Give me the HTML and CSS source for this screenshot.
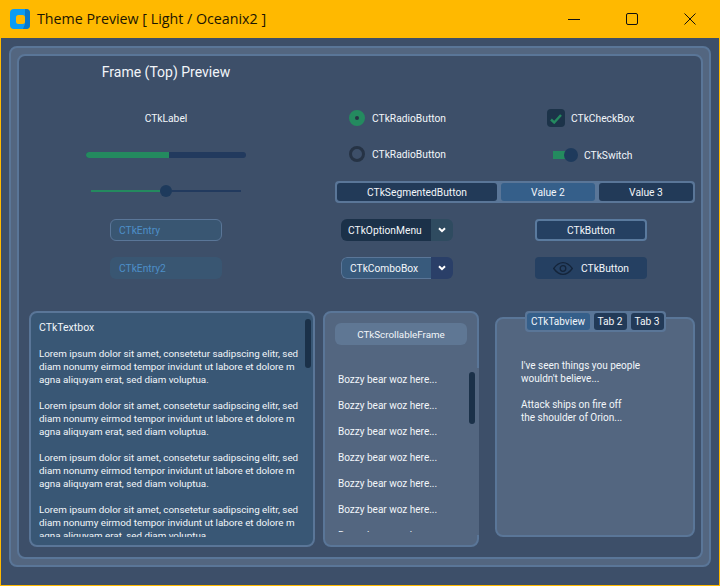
FILE: index.html
```html
<!DOCTYPE html>
<html lang="en">
<head>
    <meta charset="UTF-8">
    <title>Theme Preview</title>
    <link rel="stylesheet" href="styles.css">
</head>
<body>

<div class="window">
    <div class="titlebar">
        <svg class="app-icon" width="20" height="20" viewBox="0 0 20 20">
            <rect width="20" height="20" rx="4" fill="#0a9cf5"/>
            <path d="M15 0h1a4 4 0 0 1 4 4v12a4 4 0 0 1-4 4h-3l2-5z" fill="#0a78c8"/>
            <rect x="6" y="6" width="9" height="9" rx="2.5" fill="#ffb900"/>
        </svg>
        <span class="window-title">Theme Preview [ Light / Oceanix2 ]</span>
        <div class="window-controls">
            <svg width="12" height="12" viewBox="0 0 12 12"><path d="M0 6.5h12" stroke="#111" fill="none"/></svg>
            <svg width="12" height="12" viewBox="0 0 12 12"><rect x="0.5" y="0.5" width="11" height="11" rx="1.5" stroke="#111" fill="none"/></svg>
            <svg width="12" height="12" viewBox="0 0 12 12"><path d="M0.5 0.5l11 11M11.5 0.5l-11 11" stroke="#111" fill="none"/></svg>
        </div>
    </div>

    <div class="content">
        <div class="frame-outer">
            <div class="frame-inner">
                <div class="controls">
                    <div class="frame-title">Frame (Top) Preview</div>

                    <div class="cell c1 r1 label">CTkLabel</div>
                    <div class="cell c2 r1"><div class="radio-row"><span class="radio on"></span>CTkRadioButton</div></div>
                    <div class="cell c3 r1">
                        <div class="check-row">
                            <span class="checkbox">
                                <svg width="12" height="10" viewBox="0 0 12 10"><path d="M1 5.5l3.2 3L11 1" stroke="#248a5f" stroke-width="2.4" fill="none"/></svg>
                            </span>CTkCheckBox
                        </div>
                    </div>

                    <div class="cell c1 r2"><div class="progress"><div class="progress-fill" style="width: 52%"></div></div></div>
                    <div class="cell c2 r2"><div class="radio-row raised"><span class="radio"></span>CTkRadioButton</div></div>
                    <div class="cell c3 r2">
                        <div class="switch-row"><span class="switch"><span class="switch-thumb"></span></span>CTkSwitch</div>
                    </div>

                    <div class="cell c1 r3">
                        <div class="slider">
                            <div class="slider-done"></div>
                            <div class="slider-thumb"></div>
                            <div class="slider-rest"></div>
                        </div>
                    </div>
                    <div class="segmented">
                        <div class="seg-btn seg-first">CTkSegmentedButton</div>
                        <div class="seg-btn seg-on">Value 2</div>
                        <div class="seg-btn">Value 3</div>
                    </div>

                    <div class="cell c1 r4"><div class="entry bordered">CTkEntry</div></div>
                    <div class="cell c2 r4">
                        <div class="dropdown option">
                            <span class="dropdown-text">CTkOptionMenu</span>
                            <span class="dropdown-arrow"><svg width="8" height="6" viewBox="0 0 8 6"><path d="M1 1.2l3 3 3-3" stroke="#fff" stroke-width="2" fill="none"/></svg></span>
                        </div>
                    </div>
                    <div class="cell c3 r4"><div class="btn btn-outline">CTkButton</div></div>

                    <div class="cell c1 r5"><div class="entry">CTkEntry2</div></div>
                    <div class="cell c2 r5">
                        <div class="dropdown combo">
                            <span class="dropdown-text">CTkComboBox</span>
                            <span class="dropdown-arrow"><svg width="8" height="6" viewBox="0 0 8 6"><path d="M1 1.2l3 3 3-3" stroke="#fff" stroke-width="2" fill="none"/></svg></span>
                        </div>
                    </div>
                    <div class="cell c3 r5">
                        <div class="btn">
                            <svg width="20" height="13" viewBox="0 0 20 13">
                                <path d="M0.7 6.5C3.5 2.6 6.6 0.7 10 0.7s6.5 1.9 9.3 5.800C16.500 10.400 13.400 12.300 10 12.300S3.500 10.400 0.700 6.500z" stroke="#14243a" stroke-width="1.300" fill="none"/>
                                <circle cx="10" cy="6.500" r="2.800" stroke="#14243a" stroke-width="1.300" fill="none"/>
                            </svg>
                            CTkButton
                        </div>
                    </div>
                </div>

                <div class="panels">
                    <div class="textbox">
                        <div class="textbox-scroll"></div>
                        <div class="textbox-text"><span class="textbox-head">CTkTextbox</span>

Lorem ipsum dolor sit amet, consetetur sadipscing elitr, sed
diam nonumy eirmod tempor invidunt ut labore et dolore m
agna aliquyam erat, sed diam voluptua.

Lorem ipsum dolor sit amet, consetetur sadipscing elitr, sed
diam nonumy eirmod tempor invidunt ut labore et dolore m
agna aliquyam erat, sed diam voluptua.

Lorem ipsum dolor sit amet, consetetur sadipscing elitr, sed
diam nonumy eirmod tempor invidunt ut labore et dolore m
agna aliquyam erat, sed diam voluptua.

Lorem ipsum dolor sit amet, consetetur sadipscing elitr, sed
diam nonumy eirmod tempor invidunt ut labore et dolore m
agna aliquyam erat, sed diam voluptua.</div>
                    </div>

                    <div class="scrollable">
                        <div class="scrollable-label">CTkScrollableFrame</div>
                        <div class="scrollable-body">
                            <div class="scrollable-bar"></div>
                            <ul class="bear-list">
                                <li>Bozzy bear woz here...</li>
                                <li>Bozzy bear woz here...</li>
                                <li>Bozzy bear woz here...</li>
                                <li>Bozzy bear woz here...</li>
                                <li>Bozzy bear woz here...</li>
                                <li>Bozzy bear woz here...</li>
                                <li>Bozzy bear woz here...</li>
                            </ul>
                        </div>
                    </div>

                    <div class="tabview">
                        <div class="tabs">
                            <div class="tab tab-on">CTkTabview</div>
                            <div class="tab tab-2">Tab 2</div>
                            <div class="tab tab-3">Tab 3</div>
                        </div>
                        <div class="tab-body">I've seen things you people
wouldn't believe...

Attack ships on fire off
the shoulder of Orion...</div>
                    </div>
                </div>
            </div>
        </div>
    </div>
</div>

</body>
</html>
```

FILE: styles.css
```css
* {
    box-sizing: border-box;
}
body {
    margin: 0;
    font-family: Roboto, sans-serif;
    font-size: 10.25px;
    line-height: 13px;
    color: #f2f6fa;
    background-color: #3d4f69;
}
.window {
    width: 720px;
    height: 586px;
    display: flex;
    flex-direction: column;
    border: 1px solid #ffb900;
    border-top: none;
}

/* title bar */
.titlebar {
    height: 38px;
    margin: 0 -1px;
    padding: 0 24px 0 10px;
    display: flex;
    align-items: center;
    background-color: #ffb900;
    flex-shrink: 0;
}
.app-icon {
    margin-right: 7px;
}
.window-title {
    font-family: "Open Sans", sans-serif;
    font-size: 14.25px;
    line-height: 20px;
    color: #1c1603;
}
.window-controls {
    margin-left: auto;
    display: flex;
    gap: 46px;
}

/* frames */
.content {
    flex: 1;
    padding: 8px 8px 18px 8px;
    display: flex;
}
.frame-outer {
    flex: 1;
    padding: 6px;
    background-color: #536680;
    border: 2px solid #5a7698;
    border-radius: 8px;
    display: flex;
}
.frame-inner {
    flex: 1;
    background-color: #3d4f69;
    border: 2px solid #5a7698;
    border-radius: 8px;
}

/* top grid */
.controls {
    display: grid;
    grid-template-columns: 294px 168px 220px;
    grid-template-rows: 44px 36px 38px 36px 40px 36px;
    margin-bottom: 25px;
}
.frame-title {
    grid-column: 1;
    grid-row: 1;
    padding-top: 8px;
    font-size: 14px;
    line-height: 16px;
    text-align: center;
    color: #f2f5f9;
}
.cell {
    display: flex;
    align-items: center;
    justify-content: center;
}
.c1 { grid-column: 1; }
.c2 { grid-column: 2; }
.c3 { grid-column: 3; }
.r1 { grid-row: 2; }
.r2 { grid-row: 3; }
.r3 { grid-row: 4; }
.r4 { grid-row: 5; }
.r5 { grid-row: 6; }

.radio-row, .check-row, .switch-row {
    width: 112px;
    display: flex;
    align-items: center;
    white-space: nowrap;
}
.radio-row {
    padding-left: 8px;
    gap: 7px;
}
.radio-row.raised {
    margin-bottom: 2px;
}
.radio {
    width: 16px;
    height: 16px;
    border-radius: 50%;
    border: 3px solid #263345;
    flex-shrink: 0;
}
.radio.on {
    border: 6.500px solid #248a5f;
    background-color: #263345;
}
.check-row {
    padding-left: 12px;
    gap: 6px;
}
.checkbox {
    width: 18px;
    height: 18px;
    border-radius: 4px;
    background-color: #1c3349;
    display: flex;
    align-items: center;
    justify-content: center;
    flex-shrink: 0;
    padding-top: 2px;
}
.switch-row {
    padding-left: 18px;
    gap: 6px;
}
.switch {
    width: 25px;
    height: 14px;
    display: flex;
    align-items: center;
    justify-content: flex-end;
    background: linear-gradient(#248a5f, #248a5f) left center / 18px 8px no-repeat;
}
.switch-thumb {
    width: 14px;
    height: 14px;
    border-radius: 50%;
    background-color: #1e3a5c;
}
.progress {
    width: 160px;
    height: 6px;
    border-radius: 3px;
    background-color: #223a5e;
    overflow: hidden;
}
.progress-fill {
    height: 100%;
    background-color: #248a5f;
}
.slider {
    width: 150px;
    margin-bottom: 2px;
    display: flex;
    align-items: center;
}
.slider-done, .slider-rest {
    flex: 1;
    height: 2px;
}
.slider-done {
    background-color: #248a5f;
}
.slider-rest {
    background-color: #223a5e;
}
.slider-thumb {
    width: 12px;
    height: 12px;
    border-radius: 50%;
    background-color: #1e3a5c;
}
.segmented {
    grid-column: 2 / 4;
    grid-row: 4;
    align-self: center;
    height: 22px;
    margin: 0 6px 0 22px;
    padding: 2px;
    display: flex;
    gap: 4px;
    border-radius: 4px;
    background-color: #5a7698;
}
.seg-btn {
    width: 94px;
    display: flex;
    align-items: center;
    justify-content: center;
    border-radius: 3px;
    background-color: #223a58;
}
.seg-first {
    width: 160px;
}
.seg-on {
    background-color: #355f8a;
}
.entry {
    width: 112px;
    height: 22px;
    padding-left: 9px;
    display: flex;
    align-items: center;
    border-radius: 6px;
    color: #4d8fc8;
    background-color: #395672;
}
.entry.bordered {
    border: 1px solid #5a7698;
    padding-left: 8px;
}
.dropdown {
    width: 112px;
    height: 22px;
    display: flex;
    border-radius: 6px;
    overflow: hidden;
}
.dropdown-text {
    width: 90px;
    display: flex;
    align-items: center;
    padding-left: 7px;
    white-space: nowrap;
}
.dropdown-arrow {
    flex: 1;
    display: flex;
    align-items: center;
    justify-content: center;
}
.option .dropdown-text {
    background-color: #1b3149;
}
.option .dropdown-arrow {
    background-color: #2f4b60;
}
.combo .dropdown-text {
    padding-left: 8px;
    background-color: #385a7c;
    border: 1px solid #5a7698;
    border-right: none;
    border-radius: 6px 0 0 6px;
}
.combo .dropdown-arrow {
    background-color: #2a3f68;
}
.btn {
    width: 112px;
    height: 22px;
    display: flex;
    align-items: center;
    justify-content: center;
    gap: 8px;
    border-radius: 4px;
    background-color: #254062;
}
.btn-outline {
    border: 2px solid #5a7a9e;
}

/* bottom panels */
.panels {
    height: 236px;
    padding-left: 10px;
    display: flex;
}
.textbox {
    width: 286px;
    margin-right: 8px;
    padding: 8px;
    border: 2px solid #5a7698;
    border-radius: 8px;
    background-color: #395775;
    position: relative;
}
.textbox-text {
    height: 216px;
    overflow: hidden;
    white-space: pre;
    font-size: 9.8px;
}
.textbox-head {
    font-size: 10.5px;
}
.textbox-scroll {
    position: absolute;
    top: 6px;
    right: 2px;
    width: 6px;
    height: 49px;
    border-radius: 3px;
    background-color: #1b3149;
}
.scrollable {
    width: 156px;
    margin-right: 16px;
    padding-top: 10px;
    border: 2px solid #5a7698;
    border-radius: 8px;
    background-color: #536680;
}
.scrollable-label {
    width: 132px;
    height: 22px;
    margin-left: 10px;
    display: flex;
    align-items: center;
    justify-content: center;
    border-radius: 6px;
    font-size: 9.8px;
    background-color: #5f7794;
}
.scrollable-body {
    height: 167px;
    margin: 23px -2px 0 0;
    padding: 5px 0 4px 13px;
    background-color: #536680;
    position: relative;
}
.scrollable-bar {
    position: absolute;
    top: 4px;
    right: 4px;
    width: 6px;
    height: 52px;
    border-radius: 3px;
    background-color: #1b3149;
}
.bear-list {
    height: 159px;
    margin: 0;
    padding: 0;
    list-style: none;
    overflow: hidden;
    font-size: 10px;
}
.bear-list li {
    margin-bottom: 13px;
}
.tabview {
    width: 200px;
    display: flex;
    flex-direction: column;
    align-items: center;
    height: 226px;
}
.tabs {
    height: 21px;
    margin-bottom: -15px;
    padding: 2px;
    display: flex;
    border-radius: 4px;
    background-color: #5a7698;
    position: relative;
}
.tab {
    height: 17px;
    display: flex;
    align-items: center;
    justify-content: center;
    border-radius: 3px;
    background-color: #223a58;
    width: 33px;
    margin-left: 4px;
}
.tab-on {
    width: 63px;
    margin-left: 0;
    font-size: 10px;
    background-color: #355f8a;
}
.tab-body {
    flex: 1;
    width: 200px;
    padding: 40px 0 0 24px;
    border: 2px solid #5a7698;
    border-radius: 8px;
    background-color: #536680;
    white-space: pre;
    font-size: 10px;
}
```
